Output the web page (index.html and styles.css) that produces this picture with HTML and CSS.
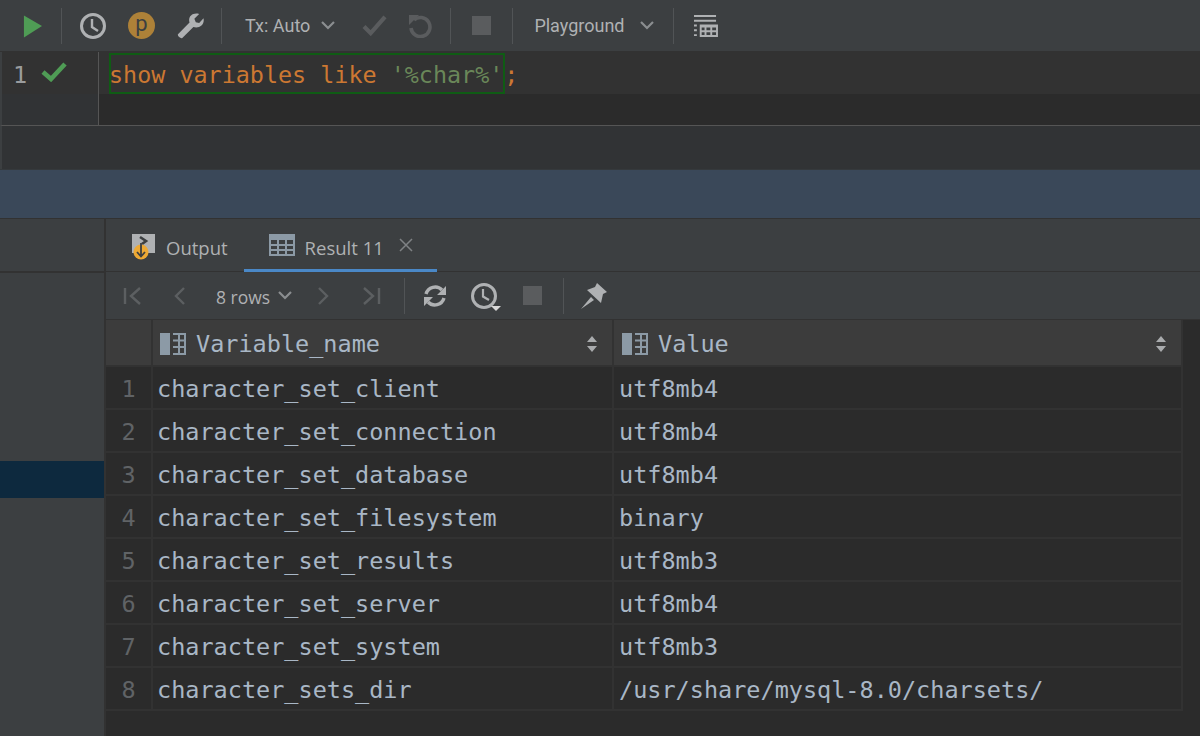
FILE: index.html
```html
<!DOCTYPE html>
<html lang="en">
<head>
<meta charset="utf-8">
<title>Console</title>
<link rel="stylesheet" href="styles.css">
</head>
<body>
<div class="app">
  <header class="toolbar">
    <svg class="i run" viewBox="0 0 20 24"><path d="M1 1 L20 12 L1 24 Z" fill="#4f9c55"/></svg>
    <span class="sep s1"></span>
    <svg class="i hist" viewBox="0 0 28 28"><circle cx="14" cy="14" r="11.5" fill="none" stroke="#afb1b3" stroke-width="3"/><path d="M13 7 V15 L19 19" fill="none" stroke="#afb1b3" stroke-width="2.4"/></svg>
    <span class="badge">p</span>
    <svg class="i wrench" viewBox="0 0 28 28"><path d="M1 23 L13 11 C11 5 16 0 23 2 L18 7 L19.5 10.5 L23 11.5 L27.5 6.5 C29 13 23 17.5 17 15.5 L5.5 27 C4 28 0 25 1 23 Z" fill="#afb1b3"/></svg>
    <span class="sep s2"></span>
    <span class="tb-text tx">Tx: Auto</span>
    <svg class="i chev c1" viewBox="0 0 14 9"><path d="M1 1 L7 7 L13 1" fill="none" stroke="#8b8e90" stroke-width="2.2"/></svg>
    <svg class="i check" viewBox="0 0 26 22"><path d="M2 12 L9 19 L24 2" fill="none" stroke="#5a5c5e" stroke-width="4.4"/></svg>
    <svg class="i undo" viewBox="0 0 24 24"><path d="M6 6 A9.5 9.5 0 1 1 3 14" fill="none" stroke="#5a5c5e" stroke-width="3.6"/><path d="M1 1 H11 L1 11 Z" fill="#5a5c5e"/></svg>
    <span class="sep s3"></span>
    <span class="stop"></span>
    <span class="sep s4"></span>
    <span class="tb-text pg">Playground</span>
    <svg class="i chev c2" viewBox="0 0 14 9"><path d="M1 1 L7 7 L13 1" fill="none" stroke="#8b8e90" stroke-width="2.2"/></svg>
    <span class="sep s5"></span>
    <svg class="i layout" viewBox="0 0 26 24"><path d="M1 1 H24 V3 H1 Z M1 6 H24 V8 H1 Z M1 11 H4 V13 H1 Z M1 16 H4 V18 H1 Z M1 21 H4 V23 H1 Z" fill="#afb1b3"/><path fill-rule="evenodd" d="M7 11 H26 V24 H7 Z M9 14 V17 H12 V14 Z M14 14 V17 H18 V14 Z M20 14 V17 H24 V14 Z M9 19 V22 H12 V19 Z M14 19 V22 H18 V19 Z M20 19 V22 H24 V19 Z" fill="#afb1b3"/></svg>
  </header>

  <section class="editor">
    <div class="gutter">
      <div class="gutter-line">
        <span class="line-no">1</span>
        <svg class="i ok" viewBox="0 0 26 20"><path d="M2 10 L10 17 L24 2" fill="none" stroke="#4f9c55" stroke-width="4.6"/></svg>
      </div>
    </div>
    <div class="code">
      <div class="code-line"><span class="stmt"><span class="kw first">show variables like </span><span class="str">'%char%'</span></span><span class="kw semi">;</span></div>
    </div>
  </section>
  <div class="editor-foot"></div>
  <div class="band"></div>

  <section class="results">
    <aside class="side">
      <div class="side-head"></div>
      <div class="side-sel"></div>
    </aside>
    <div class="pane">
      <nav class="tabs">
        <div class="tab">
          <svg class="i out" viewBox="0 0 24 28"><path d="M1 1 H24 V20 H1 Z" fill="#afb1b3"/><path d="M9 4 L15 8 L11 11" fill="none" stroke="#3c3f41" stroke-width="2.6"/><circle cx="10" cy="19" r="7.5" fill="#eda934"/><path d="M10 10 V23 M6 19 L10 23.5 L14 19" fill="none" stroke="#3c3f41" stroke-width="1.8"/></svg>
          <span class="tab-label">Output</span>
        </div>
        <div class="tab active">
          <svg class="i grid-ic" viewBox="0 0 26 22"><path fill-rule="evenodd" d="M0 0 H26 V22 H0 Z M2 6 V10 H8 V6 Z M10 6 V10 H16 V6 Z M18 6 V10 H24 V6 Z M2 12 V15 H8 V12 Z M10 12 V15 H16 V12 Z M18 12 V15 H24 V12 Z M2 17 V20 H8 V17 Z M10 17 V20 H16 V17 Z M18 17 V20 H24 V17 Z" fill="#8c9aa6"/></svg>
          <span class="tab-label">Result 11</span>
          <svg class="i close" viewBox="0 0 14 14"><path d="M1 1 L13 13 M13 1 L1 13" stroke="#7f8285" stroke-width="1.5"/></svg>
        </div>
      </nav>
      <div class="res-bar">
        <svg class="i nav n1" viewBox="0 0 20 18"><path d="M2 1 V17 M17 1 L8 9 L17 17" fill="none" stroke="#5c5f61" stroke-width="2.4"/></svg>
        <svg class="i nav n2" viewBox="0 0 12 18"><path d="M10 1 L2 9 L10 17" fill="none" stroke="#5c5f61" stroke-width="2.4"/></svg>
        <span class="rows">8 rows</span>
        <svg class="i chev c3" viewBox="0 0 14 9"><path d="M1 1 L7 7 L13 1" fill="none" stroke="#8b8e90" stroke-width="2.2"/></svg>
        <svg class="i nav n3" viewBox="0 0 12 18"><path d="M2 1 L10 9 L2 17" fill="none" stroke="#5c5f61" stroke-width="2.4"/></svg>
        <svg class="i nav n4" viewBox="0 0 20 18"><path d="M18 1 V17 M3 1 L12 9 L3 17" fill="none" stroke="#5c5f61" stroke-width="2.4"/></svg>
        <span class="sep s6"></span>
        <svg class="i refresh" viewBox="0 0 24 24"><path d="M3 10 A9.5 9.5 0 0 1 19 6 M21 14 A9.5 9.5 0 0 1 5 18" fill="none" stroke="#afb1b3" stroke-width="3.4"/><path d="M23 2 V11 H14 Z M1 22 V13 H10 Z" fill="#afb1b3"/></svg>
        <svg class="i hist2" viewBox="0 0 30 30"><circle cx="13" cy="13" r="11.5" fill="none" stroke="#afb1b3" stroke-width="3"/><path d="M12 6 V13.500 L18 17" fill="none" stroke="#afb1b3" stroke-width="2.2"/><path d="M20 23 H30 L25 28 Z" fill="#d8d8d8"/></svg>
        <span class="stop small"></span>
        <span class="sep s7"></span>
        <svg class="i pin" viewBox="0 0 28 28"><path d="M17 1 L27 10 L23 12 L21 21 L7 8 L15 5 Z M11 15 L14 18 L1 27 Z" fill="#afb1b3"/></svg>
      </div>
      <div class="table-wrap">
        <div class="table">
          <div class="row head">
            <div class="cell no"></div>
            <div class="cell c-name">
              <svg class="i col-ic" viewBox="0 0 26 22"><path d="M0 0 H10 V22 H0 Z" fill="#8c9aa6"/><path d="M13 1 H25 V21 H13 M19 1 V21 M13 7.500 H25 M13 14 H25" fill="none" stroke="#8c9aa6" stroke-width="2"/></svg>
              <span>Variable_name</span>
              <svg class="i sort" viewBox="0 0 10 16"><path d="M5 0 L10 6 H0 Z M0 10 H10 L5 16 Z" fill="#a9abad"/></svg>
            </div>
            <div class="cell c-val">
              <svg class="i col-ic" viewBox="0 0 26 22"><path d="M0 0 H10 V22 H0 Z" fill="#8c9aa6"/><path d="M13 1 H25 V21 H13 M19 1 V21 M13 7.500 H25 M13 14 H25" fill="none" stroke="#8c9aa6" stroke-width="2"/></svg>
              <span>Value</span>
              <svg class="i sort" viewBox="0 0 10 16"><path d="M5 0 L10 6 H0 Z M0 10 H10 L5 16 Z" fill="#a9abad"/></svg>
            </div>
          </div>
          <div class="row"><div class="cell no">1</div><div class="cell c-name">character_set_client</div><div class="cell c-val">utf8mb4</div></div>
          <div class="row"><div class="cell no">2</div><div class="cell c-name">character_set_connection</div><div class="cell c-val">utf8mb4</div></div>
          <div class="row"><div class="cell no">3</div><div class="cell c-name">character_set_database</div><div class="cell c-val">utf8mb4</div></div>
          <div class="row"><div class="cell no">4</div><div class="cell c-name">character_set_filesystem</div><div class="cell c-val">binary</div></div>
          <div class="row"><div class="cell no">5</div><div class="cell c-name">character_set_results</div><div class="cell c-val">utf8mb3</div></div>
          <div class="row"><div class="cell no">6</div><div class="cell c-name">character_set_server</div><div class="cell c-val">utf8mb4</div></div>
          <div class="row"><div class="cell no">7</div><div class="cell c-name">character_set_system</div><div class="cell c-val">utf8mb3</div></div>
          <div class="row"><div class="cell no">8</div><div class="cell c-name">character_sets_dir</div><div class="cell c-val">/usr/share/mysql-8.0/charsets/</div></div>
        </div>
      </div>
    </div>
  </section>
</div>
</body>
</html>
```

FILE: styles.css
```css
* { box-sizing: border-box; }
html, body { margin: 0; height: 100%; }
body {
  width: 1200px;
  height: 736px;
  overflow: hidden;
  background: #3c3f41;
  font-family: Roboto, "Noto Sans", sans-serif;
}
.app { display: flex; flex-direction: column; height: 736px; }
.i { display: block; flex: none; }

/* top toolbar */
.toolbar {
  height: 52px;
  flex: none;
  display: flex;
  align-items: center;
  background: #3c3f41;
  border-bottom: 1px solid #323232;
  padding-left: 23px;
}
.sep { width: 1px; height: 36px; background: #515456; flex: none; }
.tb-text { font-size: 18px; color: #afb1b3; line-height: 1; padding-top: 1px; }
.run { width: 19px; height: 24px; }
.s1 { margin-left: 19px; }
.hist { width: 28px; height: 28px; margin-left: 17px; }
.badge {
  width: 27px; height: 27px; border-radius: 50%;
  background: #ad8138; color: #3c3f41;
  font-size: 22px; line-height: 23px; text-align: center;
  margin-left: 21px; flex: none;
}
.wrench { width: 27px; height: 27px; margin-left: 22px; }
.s2 { margin-left: 17px; }
.tx { margin-left: 23px; }
.chev { width: 14px; height: 9px; }
.c1 { margin-left: 11px; }
.check { width: 25px; height: 21px; margin-left: 27px; }
.undo { width: 24px; height: 24px; margin-left: 21px; }
.s3 { margin-left: 18px; }
.stop { width: 19px; height: 19px; background: #5a5c5e; flex: none; }
.toolbar .stop { margin-left: 21px; }
.s4 { margin-left: 21px; }
.pg { margin-left: 21px; }
.c2 { margin-left: 16px; }
.s5 { margin-left: 19px; }
.layout { width: 25px; height: 23px; margin-left: 19px; }

/* editor */
.editor { display: flex; height: 73px; flex: none; background: #2b2b2b; border-left: 2px solid #3c3f41; }
.gutter { width: 97px; flex: none; background: #313335; border-right: 1px solid #555; }
.gutter-line { height: 42px; background: #323232; display: flex; align-items: center; padding-left: 11px; }
.line-no { font: 23.5px "DejaVu Sans Mono", monospace; color: #9a9c9e; padding-top: 3px; }
.ok { width: 26px; height: 20px; margin-left: 14px; margin-top: -3px; }
.code { flex: 1; }
.code-line {
  height: 42px; background: #323232;
  display: flex; align-items: center;
  padding-left: 10px;
  font: 23.4px "DejaVu Sans Mono", monospace;
}
.stmt {
  display: flex; align-items: center; height: 41px;
  padding: 3px 0 0 0;
  margin-top: 1px;
  border: 2px solid #0f5c14;
  white-space: pre;
}
.first { margin-left: -2px; }
.kw { color: #cc7832; }
.str { color: #6a8759; }
.semi { margin-left: -1px; padding-top: 4px; }
.editor-foot { height: 44px; flex: none; background: #313335; border-top: 1px solid #555; border-left: 2px solid #3c3f41; }
.band { height: 50px; flex: none; background: #3a4859; border-bottom: 1px solid #323232; border-top: 1px solid #35393c; }

/* results */
.results { flex: 1; display: flex; min-height: 0; }
.side { width: 106px; flex: none; background: #3c3f41; border-right: 2px solid #323232; }
.side-head { height: 54px; border-bottom: 2px solid #323232; }
.side-sel { height: 37px; margin-top: 188px; background: #0d293e; }
.pane { flex: 1; display: flex; flex-direction: column; min-width: 0; }
.tabs { height: 53px; flex: none; display: flex; padding-left: 25px; border-bottom: 1px solid #323232; padding-top: 1px; }
.tab {
  display: flex; align-items: center; gap: 10px;
  font-family: "Open Sans", "Noto Sans", sans-serif;
  font-size: 18.5px; color: #afb1b3;
  height: 52px;
}
.tab-label { padding-top: 3px; }
.out { width: 24px; height: 28px; margin: 2px 1px 0 0; }
.tab.active {
  margin-left: 16px; width: 193px; padding-left: 25px;
  border-bottom: 3px solid #4a88c7;
}
.tab.active .tab-label { padding-top: 5px; }
.grid-ic { width: 26px; height: 22px; }
.close { width: 14px; height: 14px; margin-left: 5px; }
.res-bar { height: 48px; flex: none; display: flex; align-items: center; padding-left: 17px; border-bottom: 1px solid #323232; }
.nav { height: 18px; }
.n1 { width: 20px; }
.n2 { width: 12px; margin-left: 31px; }
.rows {
  font-family: "Open Sans", "Noto Sans", sans-serif;
  font-size: 17.500px; color: #afb1b3; margin-left: 30px; padding-top: 2px;
}
.c3 { margin-left: 8px; }
.n3 { width: 12px; margin-left: 25px; }
.n4 { width: 20px; margin-left: 32px; }
.s6 { margin-left: 23px; }
.refresh { width: 24px; height: 24px; margin-left: 18px; }
.hist2 { width: 30px; height: 30px; margin-left: 24px; margin-top: 4px; }
.stop.small { margin-left: 22px; }
.s7 { margin-left: 21px; }
.pin { width: 28px; height: 28px; margin-left: 16px; }

.table-wrap { flex: 1; background: #2b2b2b; min-height: 0; }
.table { width: 1077px; }
.row {
  display: grid;
  grid-template-columns: 47px 461px 569px;
  height: 43px;
  font: 23.5px "DejaVu Sans Mono", monospace;
  color: #a9b7c6;
}
.cell {
  display: flex; align-items: center;
  border-right: 2px solid #323232;
  border-bottom: 2px solid #323232;
  padding-left: 4px;
  padding-top: 2px;
  white-space: pre;
}
.cell.c-val { padding-left: 5px; }
.cell.no { justify-content: center; padding-left: 0; color: #606366; background: #2b2b2b; }
.row.head { height: 47px; background: #3c3c3c; }
.row.head .cell { background: #3c3c3c; padding-left: 7px; padding-right: 15px; }
.row.head .cell.c-val { padding-left: 8px; }
.col-ic { width: 26px; height: 22px; margin-right: 10px; }
.sort { width: 10px; height: 16px; margin-left: auto; }
```
